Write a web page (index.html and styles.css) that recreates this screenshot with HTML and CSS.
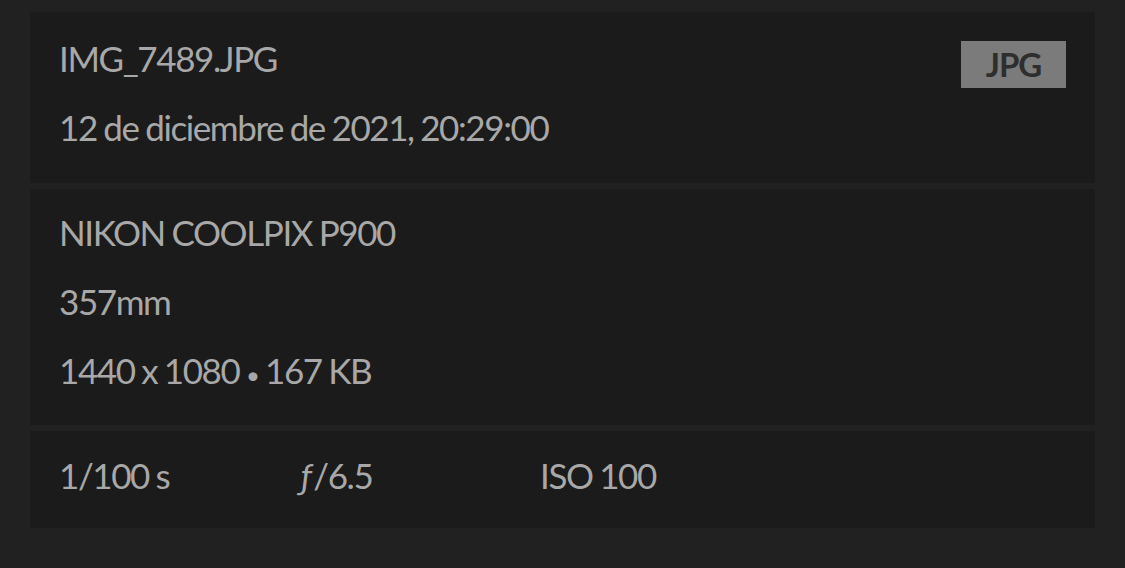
FILE: index.html
```html
<!DOCTYPE html>
<html lang="es">
<head>
  <meta charset="UTF-8" />
  <meta name="viewport" content="width=device-width, initial-scale=1.0" />
  <title>Información de la foto</title>
  <link rel="stylesheet" href="styles.css">
</head>
<body>
  <!-- archivo -->
  <div class="card card-file">
    <div class="file-info">
      <p>IMG_7489.JPG</p>
      <p>12 de diciembre de 2021, 20:29:00</p>
    </div>
    <span class="badge">JPG</span>
  </div>

  <!-- cámara -->
  <div class="card card-camera">
    <p>NIKON COOLPIX P900</p>
    <p>357mm</p>
    <p>1440 x 1080 <span class="dot">•</span> 167 KB</p>
  </div>

  <!-- exposición -->
  <div class="card card-exposure">
    <span>1/100 s</span>
    <span><span class="fnum">ƒ</span>/6.5</span>
    <span>ISO 100</span>
  </div>
</body>
</html>
```

FILE: styles.css
```css
:root {
  --page-bg: #212121;
  --card-bg: #1b1b1b;
  --text: #a8a8a8;
}

* { box-sizing: border-box; margin: 0; padding: 0; }

body {
  background: var(--page-bg);
  color: var(--text);
  font-family: Lato, "Open Sans", sans-serif;
  font-size: 35px;
  letter-spacing: -1.4px;
  word-spacing: -1px;
  line-height: 69px;
  padding: 12px 30px;
  display: flex;
  flex-direction: column;
  gap: 6px;
}

.card {
  background: var(--card-bg);
  padding: 12px 29px 20px;
}

.card-file {
  display: flex;
  justify-content: space-between;
  align-items: flex-start;
  padding-bottom: 21px;
}

.badge {
  margin-top: 17px;
  width: 105px;
  height: 47px;
  background: #7b7b7b;
  color: #2e2e2e;
  font-weight: bold;
  font-size: 33px;
  letter-spacing: -1px;
  line-height: 47px;
  text-align: center;
}

.card-camera { padding-top: 9px; }

.dot { font-size: 24px; line-height: 0; }

.card-exposure {
  display: grid;
  grid-template-columns: 242px 239px auto;
  padding-top: 10px;
  padding-bottom: 18px;
}

.fnum { font-style: italic; margin-right: 3px; }
```
